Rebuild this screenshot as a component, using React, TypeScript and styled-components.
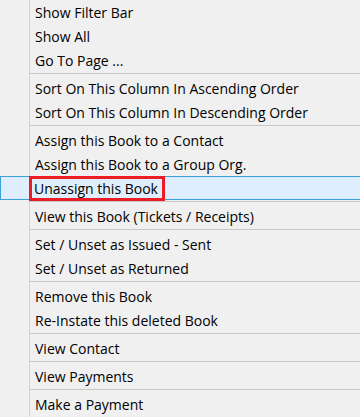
import React from 'react'
import styled, { createGlobalStyle } from 'styled-components'

const GlobalStyle = createGlobalStyle`
  html, body {
    margin: 0;
    padding: 0;
    background: #f0f0f0;
  }
`

type Entry = { label: string; active?: boolean } | 'sep'

const entries: Entry[] = [
  { label: 'Show Filter Bar' },
  { label: 'Show All' },
  { label: 'Go To Page ...' },
  'sep',
  { label: 'Sort On This Column In Ascending Order' },
  { label: 'Sort On This Column In Descending Order' },
  'sep',
  { label: 'Assign this Book to a Contact' },
  { label: 'Assign this Book to a Group Org.' },
  { label: 'Unassign this Book', active: true },
  'sep',
  { label: 'View this Book (Tickets / Receipts)' },
  'sep',
  { label: 'Set / Unset as Issued - Sent' },
  { label: 'Set / Unset as Returned' },
  'sep',
  { label: 'Remove this Book' },
  { label: 'Re-Instate this deleted Book' },
  'sep',
  { label: 'View Contact' },
  'sep',
  { label: 'View Payments' },
  'sep',
  { label: 'Make a Payment' },
]

const App: React.FC = () => {
  return (
    <>
      <GlobalStyle />
      <Menu>
        {entries.map((e, i) =>
          e === 'sep' ? (
            <Separator key={i} />
          ) : (
            <Item key={i} $active={e.active}>
              {e.label}
              {e.active && <Marker />}
            </Item>
          )
        )}
      </Menu>
    </>
  )
}

export default App

const Menu = styled.div`
  width: 360px;
  height: 417px;
  overflow: hidden;
  background-color: #f0f0f0;
  background-image: linear-gradient(#d2d2d2, #d2d2d2);
  background-size: 1px 100%;
  background-position: 29px 0;
  background-repeat: no-repeat;
  display: flex;
  flex-direction: column;
  font-family: 'Open Sans', 'Noto Sans', sans-serif;
  font-size: 14px;
  color: #000;
`

const Item = styled.div<{ $active?: boolean }>`
  position: relative;
  box-sizing: border-box;
  flex: none;
  height: 24px;
  padding-left: 34px;
  display: flex;
  align-items: center;
  white-space: nowrap;
  background: ${(p) => (p.$active ? '#dfeefc' : 'transparent')};
  border-top: 1px solid ${(p) => (p.$active ? '#3ba0e0' : 'transparent')};
  border-bottom: 1px solid ${(p) => (p.$active ? '#3ba0e0' : 'transparent')};
  border-left: 1px solid ${(p) => (p.$active ? '#3ba0e0' : 'transparent')};
  ${(p) => (p.$active ? 'padding-left: 33px;' : '')}
`

const Separator = styled.div`
  flex: none;
  box-sizing: border-box;
  height: 4px;
  margin-left: 29px;
  border-top: 1px solid transparent;
  &::after {
    content: '';
    display: block;
    height: 1px;
    background: #c8c8c8;
  }
`

const Marker = styled.span`
  position: absolute;
  left: 28px;
  top: -1px;
  width: 136px;
  height: 25px;
  box-sizing: border-box;
  border: 3px solid #ec1c24;
  pointer-events: none;
`
